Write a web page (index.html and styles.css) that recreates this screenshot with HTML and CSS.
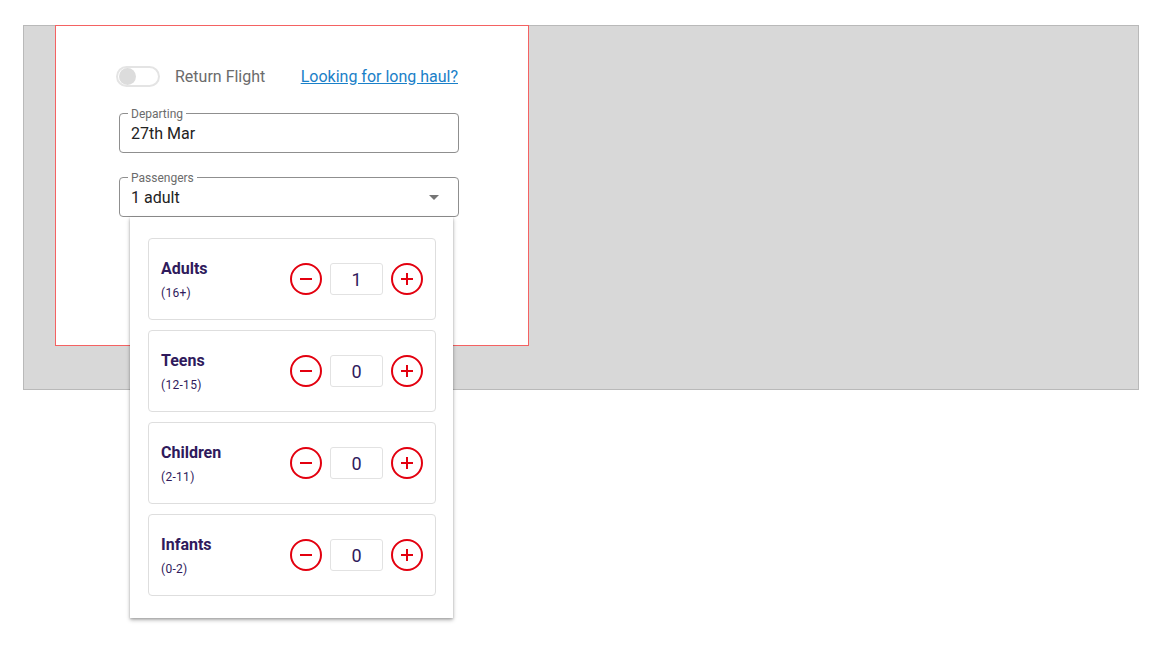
FILE: index.html
```html
<!DOCTYPE html>
<html lang="en">
<head>
<meta charset="UTF-8">
<meta name="viewport" content="width=device-width, initial-scale=1.0">
<title>Flight search</title>
<link rel="stylesheet" href="styles.css">
</head>
<body>

<div class="stage">
    <div class="search-box">
        <div class="toggle-row">
            <span class="switch"><span class="thumb"></span></span>
            <span class="switch-label">Return Flight</span>
            <a class="long-haul" href="#">Looking for long haul?</a>
        </div>

        <div class="field">
            <span class="field-label">Departing</span>
            <span class="field-value">27th Mar</span>
        </div>

        <div class="field passengers">
            <span class="field-label">Passengers</span>
            <span class="field-value">1 adult</span>
            <span class="arrow"></span>

            <!-- dropdown opened over the form -->
            <div class="dropdown">
                <div class="pax-card">
                    <div class="pax-info">
                        <div class="pax-title">Adults</div>
                        <div class="pax-age">(16+)</div>
                    </div>
                    <div class="counter">
                        <button class="round-btn minus"></button>
                        <div class="count">1</div>
                        <button class="round-btn plus"></button>
                    </div>
                </div>
                <div class="pax-card">
                    <div class="pax-info">
                        <div class="pax-title">Teens</div>
                        <div class="pax-age">(12-15)</div>
                    </div>
                    <div class="counter">
                        <button class="round-btn minus"></button>
                        <div class="count">0</div>
                        <button class="round-btn plus"></button>
                    </div>
                </div>
                <div class="pax-card">
                    <div class="pax-info">
                        <div class="pax-title">Children</div>
                        <div class="pax-age">(2-11)</div>
                    </div>
                    <div class="counter">
                        <button class="round-btn minus"></button>
                        <div class="count">0</div>
                        <button class="round-btn plus"></button>
                    </div>
                </div>
                <div class="pax-card">
                    <div class="pax-info">
                        <div class="pax-title">Infants</div>
                        <div class="pax-age">(0-2)</div>
                    </div>
                    <div class="counter">
                        <button class="round-btn minus"></button>
                        <div class="count">0</div>
                        <button class="round-btn plus"></button>
                    </div>
                </div>
            </div>
        </div>
    </div>
</div>

</body>
</html>
```

FILE: styles.css
```css
html {
    min-height: 100%;
}

body {
    margin: 0;
    padding: 0;
    min-height: 652px;
    background-color: #ffffff;
    font-family: Roboto, "Liberation Sans", Arial, sans-serif;
    overflow: visible;
}

.stage {
    margin: 25px 0 0 23px;
    width: 1114px;
    height: 363px;
    background-color: #d8d8d8;
    border: 1px solid #b9b9b9;
}

.search-box {
    box-sizing: border-box;
    margin: -1px 0 0 31px;
    width: 474px;
    height: 321px;
    background-color: #ffffff;
    border: 1px solid #f46262;
    padding: 39px 69px 0 63px;
}

.toggle-row {
    display: flex;
    align-items: center;
    height: 22px;
    margin-left: -3px;
}

.switch {
    box-sizing: border-box;
    display: flex;
    align-items: center;
    width: 44px;
    height: 21px;
    border: 2px solid #e4e4e4;
    border-radius: 11px;
    background-color: #ffffff;
    padding-left: 1px;
}

.thumb {
    width: 17px;
    height: 17px;
    border-radius: 50%;
    background-color: #dcdcdc;
}

.switch-label {
    margin-left: 15px;
    font-size: 16px;
    color: #6b6b6b;
}

.long-haul {
    margin-left: auto;
    margin-right: 1px;
    font-size: 16px;
    color: #1a80c8;
    text-decoration: underline;
}

.field {
    position: relative;
    box-sizing: border-box;
    height: 40px;
    margin-top: 26px;
    border: 1px solid #8f8f8f;
    border-radius: 4px;
    display: flex;
    align-items: center;
    padding: 0 11px;
}

.field + .field {
    margin-top: 24px;
}

.field-label {
    position: absolute;
    top: -7px;
    left: 8px;
    padding: 0 3px;
    background-color: #ffffff;
    font-size: 12px;
    line-height: 14px;
    color: #6b6b6b;
}

.field-value {
    font-size: 16px;
    color: #222222;
}

.arrow {
    margin-left: auto;
    margin-right: 8px;
    width: 0;
    height: 0;
    border-left: 5px solid transparent;
    border-right: 5px solid transparent;
    border-top: 5px solid #757575;
}

.dropdown {
    position: absolute;
    top: 39px;
    left: 10px;
    z-index: 10;
    box-sizing: border-box;
    width: 323px;
    padding: 21px 17px 22px 18px;
    background-color: #ffffff;
    box-shadow: 0 2px 4px rgba(0, 0, 0, 0.3), 0 1px 2px rgba(0, 0, 0, 0.15);
    display: flex;
    flex-direction: column;
    gap: 10px;
}

.pax-card {
    box-sizing: border-box;
    height: 82px;
    border: 1px solid #dedede;
    border-radius: 4px;
    display: flex;
    align-items: center;
    justify-content: space-between;
    padding: 0 12px;
}

.pax-info {
    padding-top: 2px;
    color: #2f1a5c;
}

.pax-title {
    font-size: 16px;
    font-weight: bold;
    line-height: 20px;
}

.pax-age {
    margin-top: 6px;
    font-size: 12px;
    line-height: 16px;
    letter-spacing: 0.3px;
}

.counter {
    display: flex;
    align-items: center;
    gap: 8px;
}

.round-btn {
    position: relative;
    box-sizing: border-box;
    width: 32px;
    height: 32px;
    padding: 0;
    border: 2px solid #e3000f;
    border-radius: 50%;
    background-color: #ffffff;
}

.round-btn::before,
.plus::after {
    content: "";
    position: absolute;
    top: 50%;
    left: 50%;
    width: 12px;
    height: 2px;
    margin: -1px 0 0 -6px;
    background-color: #e3000f;
}

.plus::after {
    width: 2px;
    height: 12px;
    margin: -6px 0 0 -1px;
}

.count {
    box-sizing: border-box;
    width: 53px;
    height: 32px;
    border: 1px solid #e2e2e2;
    border-radius: 3px;
    display: flex;
    align-items: center;
    justify-content: center;
    font-size: 18px;
    color: #2f1a5c;
}
```
